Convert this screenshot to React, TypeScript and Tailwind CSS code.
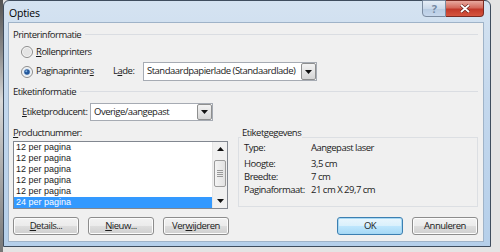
import React from 'react';

const ui = "font-['Open_Sans','Noto_Sans',sans-serif] text-[9.5px] tracking-[-0.5px] text-[#1b1b1b]";

const Radio = ({ checked = false }: { checked?: boolean }) => (
  <svg width="12" height="12" viewBox="0 0 12 12" className="shrink-0">
    <circle cx="6" cy="6" r="5.5" fill="#f7f7f7" stroke="#8c8c8c" />
    <circle cx="6" cy="6" r="4" fill={checked ? '#e2ebf4' : '#e4e4e4'} />
    {checked && <circle cx="6" cy="6" r="2.8" fill="#24589c" />}
    {checked && <circle cx="5.3" cy="5.2" r="1" fill="#7fb0e0" />}
  </svg>
);

const Arrow = ({ up = false }: { up?: boolean }) => (
  <svg width="7" height="4" viewBox="0 0 7 4">
    <path d={up ? 'M0 4 L3.5 0 L7 4 Z' : 'M0 0 L7 0 L3.5 4 Z'} fill="#111" />
  </svg>
);

const Combo = ({ text, width, height }: { text: string; width: string; height: string }) => (
  <div className={`flex ${width} ${height} border border-[#a6abb3] bg-white`}>
    <span className="flex-1 pl-[3px] flex items-center whitespace-nowrap overflow-hidden">{text}</span>
    <div className="w-[15px] flex items-center justify-center border border-[#8e8f8f] rounded-[2px] bg-[linear-gradient(to_bottom,#f3f3f3,#e4e4e4_50%,#d5d5d5)]">
      <Arrow />
    </div>
  </div>
);

const Section = ({ title }: { title: string }) => (
  <div className="flex items-center h-[12px] gap-[4px]">
    <span>{title}</span>
    <div className="flex-1 h-px bg-[#dadde2] -mt-[2px]" />
  </div>
);

const Btn = ({ children, primary = false }: { children: React.ReactNode; primary?: boolean }) => (
  <div
    className={`w-[66px] h-[18px] flex items-center justify-center rounded-[3px] border ${
      primary
        ? 'border-[#3c7fb1] bg-[linear-gradient(to_bottom,#eaf6fd,#d9f0fc_50%,#bee6fd_51%,#a7d9f5)] shadow-[inset_0_0_0_1px_#a6d8f4]'
        : 'border-[#8d8d8d] bg-[linear-gradient(to_bottom,#f2f2f2,#ebebeb_50%,#dddddd_51%,#cfcfcf)] shadow-[inset_0_0_0_1px_#fcfcfc]'
    }`}
  >
    {children}
  </div>
);

const items = ['12 per pagina', '12 per pagina', '12 per pagina', '12 per pagina', '12 per pagina', '24 per pagina'];

const ListBox = () => (
  <div className="flex h-[68px] border border-[#828790] bg-white">
    <div className="flex-1 flex flex-col font-['Liberation_Sans',sans-serif] text-[9px] tracking-normal">
      {items.map((it, i) => (
        <div
          key={i}
          className={`h-[11px] leading-[11px] pl-[2px] ${i === items.length - 1 ? 'bg-[#3399ff] text-white' : ''}`}
        >
          {it}
        </div>
      ))}
    </div>
    <div className="w-[15px] flex flex-col bg-[#f0f0f0] border-l border-[#e6e6e6]">
      <div className="h-[14px] flex items-center justify-center">
        <Arrow up />
      </div>
      <div className="mt-[4px] mx-[1px] h-[27px] rounded-[2px] border border-[#9c9c9c] bg-[linear-gradient(to_right,#f4f4f4,#e2e2e2)] flex flex-col items-center justify-center gap-[1px]">
        <div className="w-[6px] h-px bg-[#9a9a9a]" />
        <div className="w-[6px] h-px bg-[#9a9a9a]" />
        <div className="w-[6px] h-px bg-[#9a9a9a]" />
        <div className="w-[6px] h-px bg-[#9a9a9a]" />
      </div>
      <div className="flex-1" />
      <div className="h-[14px] flex items-center justify-center">
        <Arrow />
      </div>
    </div>
  </div>
);

const details: [string, string][] = [
  ['Type:', 'Aangepast laser'],
  ['Hoogte:', '3,5 cm'],
  ['Breedte:', '7 cm'],
  ['Paginaformaat:', '21 cm X 29,7 cm'],
];

export default function App() {
  return (
    <div className={`w-[500px] h-[252px] flex bg-[#e4e4e4] overflow-hidden ${ui}`}>
      <div className="w-[3px] bg-[linear-gradient(to_bottom,#555,#8a8a8a_20%,#d8d8d8_40%,#777)]" />
      <div className="w-[488px] h-[247px] flex flex-col rounded-t-[6px] border border-[#3f4d5e] bg-[linear-gradient(to_bottom,#d5e3f1,#c4d8ed_40%,#b5cfea)] pl-[4px] pr-[6px] pb-[4px]">
        {/* title bar */}
        <div className="h-[21px] flex items-start">
          <span className="pt-[6px] pl-[1px] text-[10.5px] tracking-[-0.2px] text-black leading-[12px]">Opties</span>
          <div className="flex-1" />
          <div className="flex -mt-px">
            <div className="w-[24px] h-[17px] flex items-center justify-center rounded-bl-[4px] border border-[#7b8ba0] bg-[linear-gradient(to_bottom,#e6eef7,#cbd9ea_50%,#b7cbe2_51%,#c6d7ec)]">
              <span className="text-[11px] font-bold leading-none text-[#7589a2]">?</span>
            </div>
            <div className="w-[38px] h-[17px] flex items-center justify-center rounded-br-[4px] border border-l-0 border-[#7a2a22] bg-[linear-gradient(to_bottom,#e8a99f,#d46a5c_45%,#c2392a_55%,#d5553f)]">
              <svg width="10" height="9" viewBox="0 0 10 9">
                <path d="M1 1 L9 8 M9 1 L1 8" stroke="#5a1a14" strokeWidth="3" />
                <path d="M1 1 L9 8 M9 1 L1 8" stroke="#fff" strokeWidth="1.8" />
              </svg>
            </div>
          </div>
        </div>
        {/* client */}
        <div className="flex-1 flex flex-col border border-[#9fb3c8] bg-[#f0f0f0] pl-[4px] pr-[5px] pt-[6px]">
          <Section title="Printerinformatie" />
          <div className="mt-[4px] h-[14px] flex items-center pl-[8px] gap-[3px]">
            <Radio />
            <span>
              <u>R</u>ollenprinters
            </span>
          </div>
          <div className="mt-[3px] h-[19px] flex items-center pl-[8px]">
            <Radio checked />
            <span className="ml-[3px] w-[77px]">
              Paginaprinter<u>s</u>
            </span>
            <span className="w-[30px]">
              L<u>a</u>de:
            </span>
            <Combo text="Standaardpapierlade (Standaardlade)" width="w-[174px]" height="h-[19px]" />
          </div>
          <div className="mt-[5px]">
            <Section title="Etiketinformatie" />
          </div>
          <div className="mt-[5px] h-[18px] flex items-center pl-[9px]">
            <span className="w-[68px]">
              <u>E</u>tiketproducent:
            </span>
            <Combo text="Overige/aangepast" width="w-[123px]" height="h-[18px]" />
          </div>
          <div className="mt-[6px] flex gap-[10px]">
            <div className="w-[215px] flex flex-col">
              <div className="h-[12px] flex items-center">
                <span>
                  <u>P</u>roductnummer:
                </span>
              </div>
              <div className="mt-[2px]">
                <ListBox />
              </div>
            </div>
            <div className="flex-1 pt-[10px]">
              <div className="relative h-[70px] border border-[#dcdfe3]">
                <span className="absolute -top-[11px] left-[2px] px-[1px] bg-[#f0f0f0] leading-[12px]">
                  Etiketgegevens
                </span>
                <div className="pt-[4px] pl-[5px] flex flex-col">
                  {details.map(([k, v], i) => (
                    <div key={k} className={`flex h-[13px] items-center ${i === 1 ? 'mt-[3px]' : ''}`}>
                      <span className="w-[67px]">{k}</span>
                      <span>{v}</span>
                    </div>
                  ))}
                </div>
              </div>
            </div>
          </div>
          <div className="mt-[8px] flex gap-[9px]">
            <Btn>
              <span>
                <u>D</u>etails...
              </span>
            </Btn>
            <Btn>
              <span>
                <u>N</u>ieuw...
              </span>
            </Btn>
            <Btn>
              <span>
                Ver<u>w</u>ijderen
              </span>
            </Btn>
            <div className="flex-1" />
            <Btn primary>OK</Btn>
            <Btn>Annuleren</Btn>
          </div>
        </div>
      </div>
    </div>
  );
}
